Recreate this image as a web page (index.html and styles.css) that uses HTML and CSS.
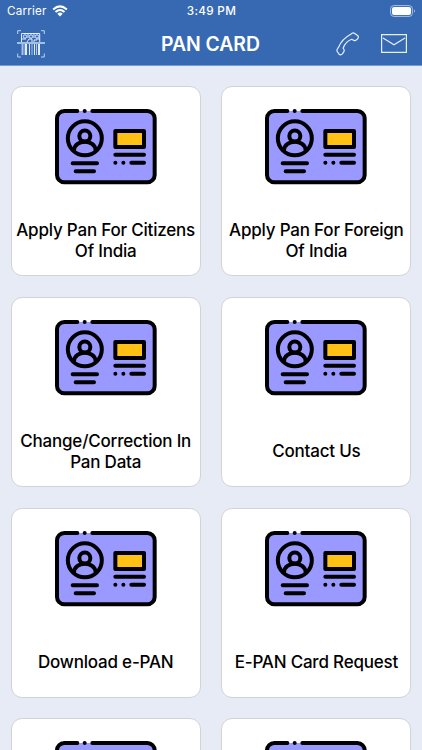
FILE: index.html
```
<!DOCTYPE html>
<html lang="en">
<head>
<meta charset="utf-8">
<title>PAN CARD</title>
<link rel="stylesheet" href="styles.css">
</head>
<body>
<svg class="defs" width="0" height="0" aria-hidden="true">
  <symbol id="pan" viewBox="30 24 306 231">
    <rect x="36" y="33" width="293" height="214" rx="21" fill="#9a99ff"/>
    <g fill="none" stroke="#000" stroke-width="12" stroke-linecap="round" stroke-linejoin="round">
      <path d="M97 33H58A22 22 0 0 0 36 55V225A22 22 0 0 0 58 247H307A22 22 0 0 0 329 225V55A22 22 0 0 0 307 33H142M119 33h.1"/>
      <circle cx="119.500" cy="115" r="51"/>
      <circle cx="119.500" cy="108" r="16.500"/>
      <path d="M87 151C89 117 150 117 152 151M83 190H156M92 214H147M211 164H297M211 188h.1M235 188h.1M259 188H297"/>
      <path d="M211 93H297V141H211Z" fill="#ffc114"/>
    </g>
  </symbol>
</svg>
<header>
  <div class="status">
    <div class="carrier"><span>Carrier</span>
      <svg width="16" height="12" viewBox="0 0 16 12"><g fill="none" stroke="#fff" stroke-width="2"><path d="M1.100 4.400Q8-1.600 14.900 4.400M3.500 7Q8 3 12.500 7"/></g><path d="M5.300 8.700Q8 6.500 10.700 8.700L8 11.400Z" fill="#fff"/></svg>
    </div>
    <time>3:49 PM</time>
    <svg class="battery" width="26" height="12" viewBox="0 0 26 12"><rect x=".6" y=".6" width="21.800" height="10.800" rx="3.200" fill="none" stroke="#a9c0e3"/><rect x="2" y="2" width="19" height="8" rx="2" fill="#fff"/><path d="M24 4.200Q26 6 24 7.800Z" fill="#a9c0e3"/></svg>
  </div>
  <nav>
    <svg class="scan" width="28" height="28" viewBox="0 0 28 28" fill="none" stroke="#dfedff">
      <path d="M.7 4V.7H4M24 .7H27.300V4M.7 23.500V27H4M24 27H27.300V23.500" stroke-width=".8"/>
      <path d="M0 13H28" stroke-width="1.300"/>
      <path d="M4.500 12V3.500H22.700V12M11 4V8M17 4V8M5 9H9M19 9H23M10 12L12 9H15V12M17 12V10H20" stroke-width="1"/>
      <circle cx="8" cy="6.500" r="1.700"/><circle cx="14" cy="6.500" r="1.700"/><circle cx="20" cy="6.500" r="1.700"/>
      <path d="M5.200 14V25M12.500 14V25M17.500 14V25" stroke-width="1"/>
      <path d="M9 14V25M22 14V25" stroke-width="2"/><path d="M15 14V25M19.500 14V25M7 14V25" stroke-width=".7"/>
    </svg>
    <h1>PAN CARD</h1>
    <svg class="phone" width="24" height="24" viewBox="0 0 24 24"><path d="M14.800 2.300C16.100.8 17.600.7 18.700 1.500L21.800 3.700C22.800 4.600 22.400 6 21.300 7.200L19.400 8.400C18.200 9.200 17.200 8.100 15.800 7.300C12.100 8.600 8.400 12.500 7.100 16.200C8.100 17.400 8.600 18.300 8 19.400L6.400 21.900C5.300 23.100 3.900 23.100 2.900 22L1.200 19.500C.4 18.300 1 17.200 2.300 15.700C4.600 10.200 9 5.300 14.800 2.300Z" fill="none" stroke="#e7f1ff" stroke-width="1.200"/></svg>
    <svg class="mail" width="26" height="19" viewBox="0 0 26 19"><path d="M.6.6H25.400V18.400H.6ZM2 4.100L13 10.800L24 4.100" fill="none" stroke="#e3eeff" stroke-width="1.200"/></svg>
  </nav>
</header>
<main>
  <article><svg class="icon"><use href="#pan"/></svg><p>Apply Pan For Citizens<br>Of India</p></article>
  <article><svg class="icon"><use href="#pan"/></svg><p>Apply Pan For Foreign<br>Of India</p></article>
  <article><svg class="icon"><use href="#pan"/></svg><p>Change/Correction In<br>Pan Data</p></article>
  <article><svg class="icon"><use href="#pan"/></svg><p>Contact Us</p></article>
  <article><svg class="icon"><use href="#pan"/></svg><p>Download e-PAN</p></article>
  <article><svg class="icon"><use href="#pan"/></svg><p>E-PAN Card Request</p></article>
  <article><svg class="icon"><use href="#pan"/></svg></article>
  <article><svg class="icon"><use href="#pan"/></svg></article>
</main>
</body>
</html>
```
FILE: styles.css
```
* { box-sizing: border-box; }
body { display: flex; flex-direction: column; height: 750px; margin: 0; overflow: hidden; background: #e7ebf6; color: #000; font-family: Inter, sans-serif; }
svg { display: block; flex: none; }
.defs { position: absolute; }
header { flex: none; height: 66px; background: #3769b3; border-bottom: 1px solid #769bd0; color: #fff; }
.status { display: grid; grid-template-columns: 1fr auto 1fr; align-items: center; height: 22px; padding: 0 6px 0 7px; font-size: 11.7px; line-height: 22px; }
.carrier { display: flex; align-items: center; gap: 5px; letter-spacing: .2px; }
time { font-weight: 500; letter-spacing: .3px; }
.battery { justify-self: end; }
nav { display: flex; align-items: center; height: 43px; padding: 0 15px 0 17px; }
h1 { margin: 0 0 0 116px; width: 100px; white-space: nowrap; font-size: 19.4px; font-weight: 600; line-height: 26px; letter-spacing: -.05px; }
.phone { margin-left: 75px; }
.mail { margin-left: auto; }
main { flex: 1; min-height: 0; overflow: hidden; display: grid; grid-template-columns: 190px 190px; grid-auto-rows: 190px; gap: 20.8px 20.7px; padding: 20px 10.7px 0; }
article { display: flex; flex-direction: column; align-items: center; padding-top: 21px; background: #fff; border: 1px solid #d2d3d8; border-radius: 11px; }
.icon { width: 102px; height: 77px; }
p { margin: auto 0; padding-top: 21.500px; text-align: center; white-space: nowrap; font-size: 17px; font-weight: 500; line-height: 20.6px; letter-spacing: -.2px; }
```
